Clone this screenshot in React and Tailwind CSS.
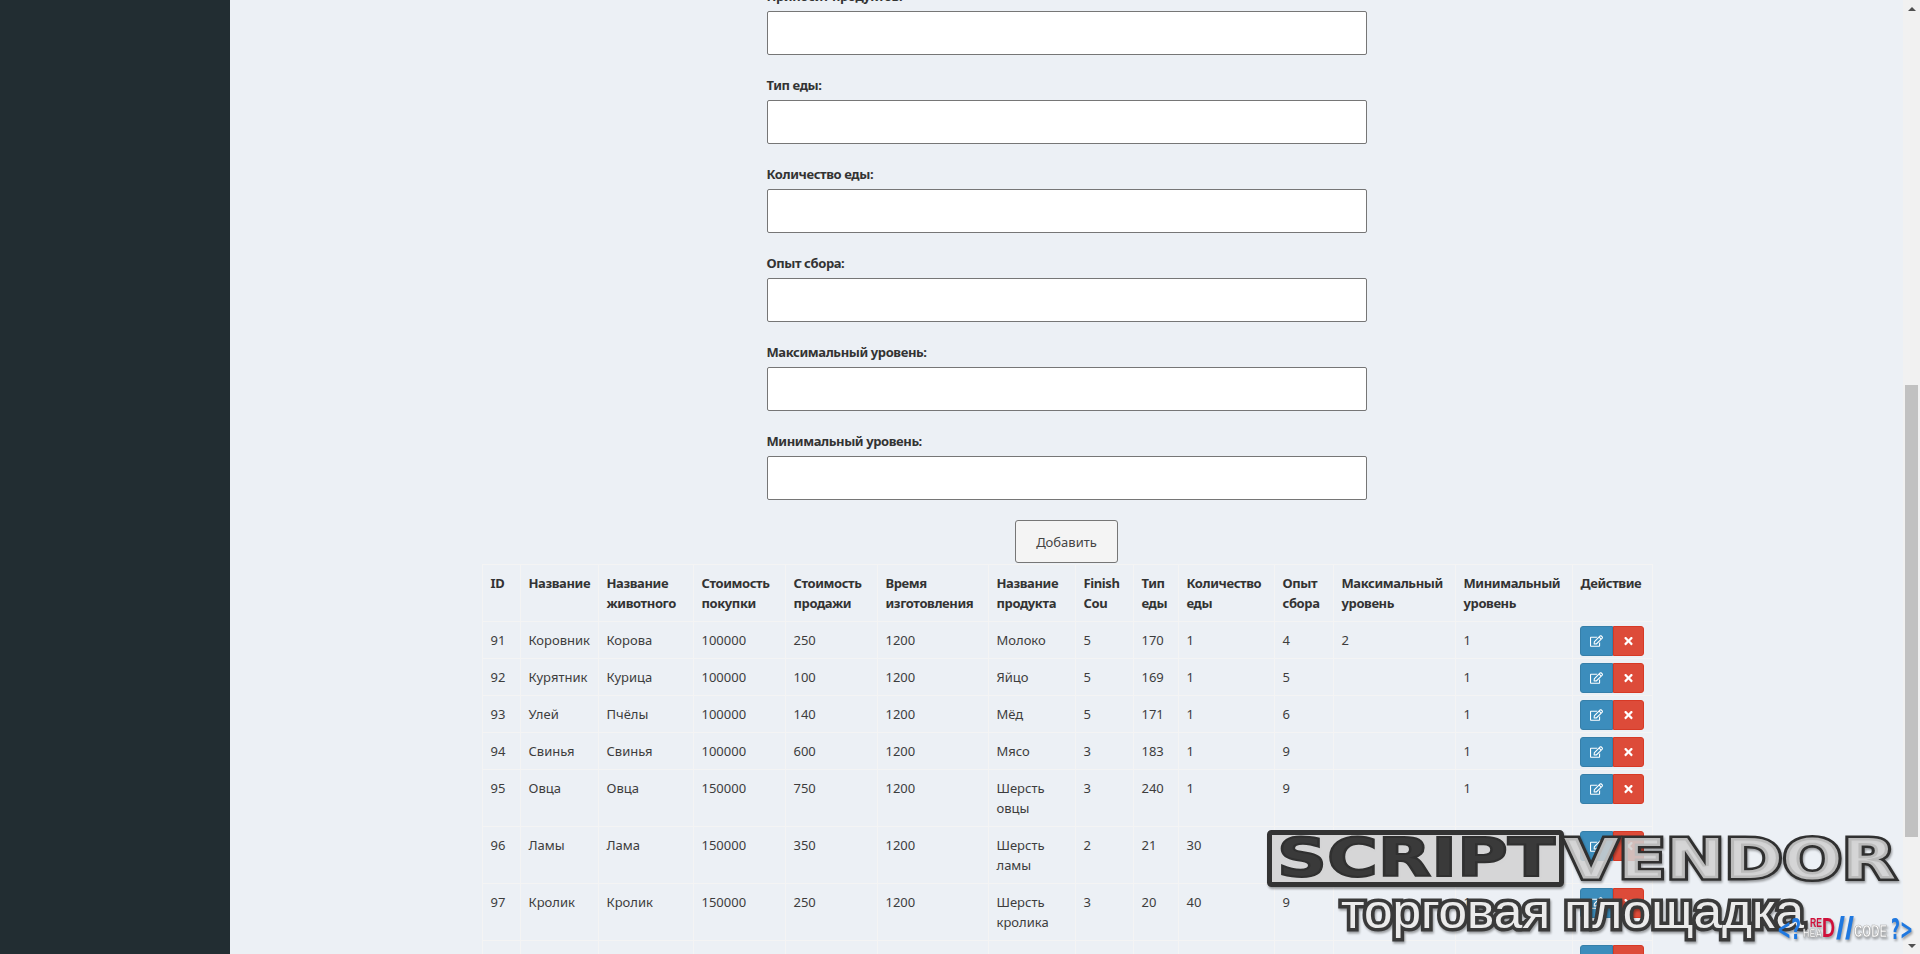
import React from "react";
import { FaRegEdit, FaTimes } from "react-icons/fa";

const fields = ["Приносит продуктов:", "Тип еды:", "Количество еды:", "Опыт сбора:", "Максимальный уровень:", "Минимальный уровень:"];
const widths = [38, 78, 95, 92, 92, 111, 87, 58, 45, 96, 59, 122, 117, 80];
const headers = ["ID", "Название", "Название животного", "Стоимость покупки", "Стоимость продажи", "Время изготовления", "Название продукта", "Finish Cou", "Тип еды", "Количество еды", "Опыт сбора", "Максимальный уровень", "Минимальный уровень", "Действие"];
const rows = [
  ["91", "Коровник", "Корова", "100000", "250", "1200", "Молоко", "5", "170", "1", "4", "2", "1"],
  ["92", "Курятник", "Курица", "100000", "100", "1200", "Яйцо", "5", "169", "1", "5", "", "1"],
  ["93", "Улей", "Пчёлы", "100000", "140", "1200", "Мёд", "5", "171", "1", "6", "", "1"],
  ["94", "Свинья", "Свинья", "100000", "600", "1200", "Мясо", "3", "183", "1", "9", "", "1"],
  ["95", "Овца", "Овца", "150000", "750", "1200", "Шерсть овцы", "3", "240", "1", "9", "", "1"],
  ["96", "Ламы", "Лама", "150000", "350", "1200", "Шерсть ламы", "2", "21", "30", "9", "", "1"],
  ["97", "Кролик", "Кролик", "150000", "250", "1200", "Шерсть кролика", "3", "20", "40", "9", "", "1"],
  ["", "", "", "", "", "", "", "", "", "", "", "", ""],
];

function Actions() {
  return (
    <div className="flex h-[30px] w-[64px]">
      <button className="flex h-full w-[33px] items-center justify-center rounded-l-[3px] border border-[#367fa9] bg-[#3c8dbc] text-white">
        <FaRegEdit className="h-[12px] w-[13px]" />
      </button>
      <button className="flex h-full w-[31px] items-center justify-center rounded-r-[3px] border border-[#d73925] bg-[#dd4b39] text-white">
        <FaTimes className="h-[12px] w-[11px]" />
      </button>
    </div>
  );
}

function Watermark() {
  return (
    <svg className="absolute left-[1260px] top-[825px] drop-shadow-[1px_2px_1px_rgba(0,0,0,0.35)]" width="660" height="129" viewBox="0 0 660 129">
      <rect x="9.5" y="7.5" width="292" height="52" rx="2" fill="#dcdcdc" fillOpacity="0.88" stroke="#333333" strokeWidth="5" />
      <text x="17" y="51" textLength="278" lengthAdjust="spacingAndGlyphs" fontFamily="'DejaVu Sans', sans-serif" fontWeight="700" fontSize="53" fill="#3a3a3a" stroke="#303030" strokeWidth="2">SCRIPT</text>
      <text x="304" y="53" textLength="332" lengthAdjust="spacingAndGlyphs" fontFamily="'DejaVu Sans', sans-serif" fontWeight="700" fontSize="56" fill="#dedede" fillOpacity="0.8" stroke="#303030" strokeWidth="5" style={{ paintOrder: "stroke" }}>VENDOR</text>
      <text x="81" y="103" textLength="463" lengthAdjust="spacingAndGlyphs" fontFamily="'Liberation Sans', Arial, sans-serif" fontSize="49" fill="#ffffff" fillOpacity="0.9" stroke="#3a3a3a" strokeWidth="7" style={{ paintOrder: "stroke" }}>торговая площадка</text>
      <text x="517" y="114" textLength="24" lengthAdjust="spacingAndGlyphs" fontFamily="'DejaVu Sans', sans-serif" fontWeight="700" fontSize="28" fill="#1f78e0">&lt;?</text>
      <text x="550" y="102" textLength="12" lengthAdjust="spacingAndGlyphs" fontFamily="'Liberation Sans', sans-serif" fontWeight="700" fontSize="12" fill="#d0103a">RE</text>
      <text x="543" y="112" textLength="19" lengthAdjust="spacingAndGlyphs" fontFamily="'Liberation Sans', sans-serif" fontWeight="700" fontSize="11" fill="#ffffff" stroke="#a8a8a8" strokeWidth="0.6">HEA</text>
      <text x="562" y="112" textLength="13" lengthAdjust="spacingAndGlyphs" fontFamily="'Liberation Sans', sans-serif" fontWeight="700" fontSize="28" fill="#d0103a">D</text>
      <text x="576" y="114" textLength="18" lengthAdjust="spacingAndGlyphs" fontFamily="'Liberation Sans', sans-serif" fontWeight="700" fontSize="31" fill="#1f78e0">//</text>
      <text x="594" y="112" textLength="33" lengthAdjust="spacingAndGlyphs" fontFamily="'Liberation Sans', sans-serif" fontWeight="700" fontSize="17" fill="#ffffff" stroke="#a8a8a8" strokeWidth="0.7">CODE</text>
      <text x="631" y="114" textLength="22" lengthAdjust="spacingAndGlyphs" fontFamily="'DejaVu Sans', sans-serif" fontWeight="700" fontSize="28" fill="#1f78e0">?&gt;</text>
    </svg>
  );
}

export default function App() {
  return (
    <div className="relative flex h-[954px] w-full overflow-hidden bg-[#ecf0f5] font-['Noto_Sans',sans-serif] text-[13px] leading-[20px] text-[#3d3d3d]">
      <aside className="w-[230px] shrink-0 bg-[#222d32]" />
      <main className="flex min-w-0 flex-1 flex-col items-center overflow-hidden">
        <form className="-mt-[14px] flex w-[600px] shrink-0 flex-col items-center">
          {fields.map((f) => (
            <div key={f} className="mb-[20px] w-full">
              <label className="mb-[5px] block h-[20px] font-bold tracking-[-0.4px] text-[#333333]">{f}</label>
              <input type="text" className="block h-[44px] w-full rounded-[2px] border border-[#767676] bg-white" />
            </div>
          ))}
          <button type="button" className="h-[43px] w-[103px] rounded-[3px] border border-[#767676] bg-[#f4f4f4] text-[#444444]">Добавить</button>
        </form>
        <table className="ml-[1px] mt-[1px] w-[1170px] shrink-0 table-fixed border-collapse border border-[#f4f4f4]">
          <colgroup>
            {widths.map((w, i) => (
              <col key={i} style={{ width: w }} />
            ))}
          </colgroup>
          <thead>
            <tr>
              {headers.map((h) => (
                <th key={h} className="border border-[#f4f4f4] p-[8px] text-left align-top font-bold tracking-[-0.4px] text-[#333333]">{h}</th>
              ))}
            </tr>
          </thead>
          <tbody>
            {rows.map((r, i) => (
              <tr key={i}>
                {r.map((c, j) => (
                  <td key={j} className="border border-[#f4f4f4] p-[8px] align-top">{c}</td>
                ))}
                <td className="border border-[#f4f4f4] px-[7px] pb-[2px] pt-[4px] align-top">
                  <Actions />
                </td>
              </tr>
            ))}
          </tbody>
        </table>
      </main>
      <div className="flex w-[17px] shrink-0 flex-col items-center bg-[#f1f1f1]">
        <div className="flex h-[17px] w-full shrink-0 items-center justify-center">
          <div className="h-0 w-0 border-x-[4px] border-b-[4px] border-x-transparent border-b-[#505050]" />
        </div>
        <div className="h-[368px] shrink-0" />
        <div className="h-[452px] w-[13px] shrink-0 bg-[#c1c1c1]" />
        <div className="flex-1" />
        <div className="flex h-[17px] w-full shrink-0 items-center justify-center">
          <div className="h-0 w-0 border-x-[4px] border-t-[4px] border-x-transparent border-t-[#505050]" />
        </div>
      </div>
      <Watermark />
    </div>
  );
}
